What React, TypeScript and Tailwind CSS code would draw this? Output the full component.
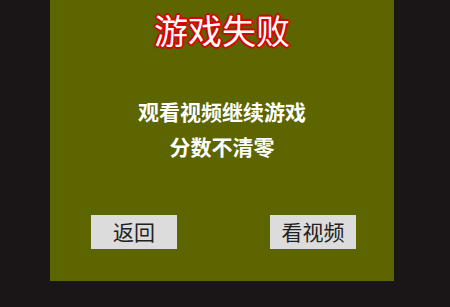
export default function App() {
    return (
        <div className="flex h-[307px] w-[450px] bg-[#1a1617] font-['Noto_Sans_CJK_SC','Noto_Sans',sans-serif]">
            <div className="ml-[50px] flex h-[281px] w-[344px] flex-col bg-[#5c6500]">
                <h1 className="mt-[9px] text-center text-[34px] leading-[42px] font-normal text-white [text-shadow:0_0_2px_#e00000,1px_1px_0_#e00000,-1px_-1px_0_#e00000,1px_-1px_0_#e00000,-1px_1px_0_#e00000,2px_0_1px_#d00000,-2px_0_1px_#d00000,0_2px_1px_#d00000,0_-2px_1px_#d00000]">
                    游戏失败
                </h1>

                <div className="mt-[43px] text-center text-[21px] leading-[35px] font-bold text-white">
                    <p>观看视频继续游戏</p>
                    <p>分数不清零</p>
                </div>

                <div className="mt-[51px] flex justify-between pl-[41px] pr-[38px]">
                    <button className="h-[34px] w-[86px] bg-[#dcdcdc] text-[21px] text-[#222]">
                        返回
                    </button>
                    <button className="h-[34px] w-[86px] bg-[#dcdcdc] text-[21px] text-[#222]">
                        看视频
                    </button>
                </div>
            </div>
        </div>
    );
}
